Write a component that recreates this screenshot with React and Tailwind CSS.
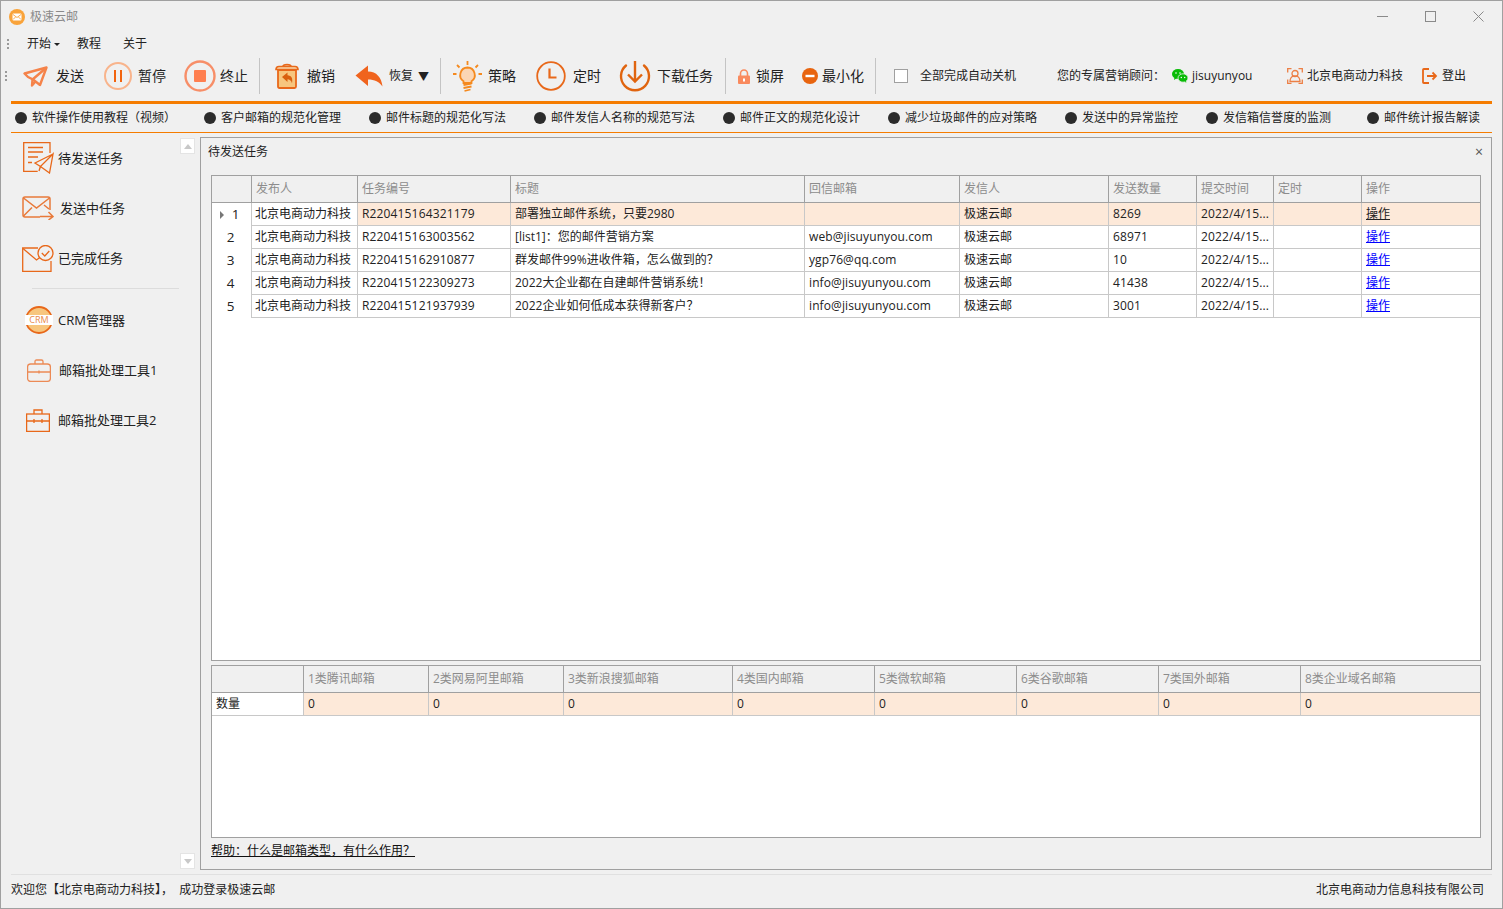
import React from 'react';

const OR = '#e8681a';

const Grip = ({ className }) => (
  <div className={`flex flex-col gap-[2px] w-[3px] shrink-0 ${className}`}>
    <span className="w-[2px] h-[2px] bg-[#9a9a9a]" />
    <span className="w-[2px] h-[2px] bg-[#9a9a9a]" />
    <span className="w-[2px] h-[2px] bg-[#9a9a9a]" />
  </div>
);

const Sep = ({ className }) => <div className={`w-px h-[36px] bg-[#c4c4c4] shrink-0 ${className}`} />;

const Label = ({ children, className }) => (
  <span className={`shrink-0 whitespace-nowrap text-[#222] ${className}`}>{children}</span>
);

const SendIcon = () => (
  <svg viewBox="0 0 25 21" className="w-[25px] h-[21px] ml-[15px] shrink-0" fill="none" stroke="#f5834a" strokeWidth="2.400" strokeLinejoin="round">
    <path d="M1.500 7.500 23.500 1.500 17 19 10 13.500 5 11Z" />
    <path d="M23 2 9.500 13.500 9 19.500 12.500 15.500" />
  </svg>
);

const PauseIcon = () => (
  <svg viewBox="0 0 28 28" className="w-[28px] h-[28px] ml-[20px] shrink-0" fill="none">
    <circle cx="14" cy="14" r="13" stroke="#f8b48c" strokeWidth="2" />
    <path d="M11 8v12M17 8v12" stroke="#f2640f" strokeWidth="2" />
  </svg>
);

const StopIcon = () => (
  <svg viewBox="0 0 32 32" className="w-[32px] h-[32px] ml-[18px] shrink-0" fill="none">
    <circle cx="16" cy="16" r="14.500" stroke="#f78e68" strokeWidth="2.400" />
    <rect x="10" y="10" width="12" height="12" rx="1" fill="#ff7f50" />
  </svg>
);

const UndoIcon = () => (
  <svg viewBox="0 0 24 26" className="w-[24px] h-[26px] ml-[15px] shrink-0" fill="none">
    <path d="M8 3.500C8 1 16 1 16 3.500" stroke={OR} strokeWidth="1.600" />
    <path d="M1 6.500Q1 3.500 4 3.500h16Q23 3.500 23 6.500Z" fill="#f9d9ae" stroke={OR} strokeWidth="1.600" />
    <path d="M3 7h18v16.500q0 1.500-1.500 1.500h-15Q3 25 3 23.500Z" fill="#f7c67e" stroke={OR} strokeWidth="1.800" />
    <path d="M7 14 12.500 9.500v2.800c4 .2 5.500 3 4.500 8-1-3-2.500-4-4.500-4v2.700Z" fill="#d9600f" />
  </svg>
);

const RestoreIcon = () => (
  <svg viewBox="0 0 28 22" className="w-[28px] h-[22px] ml-[20px] shrink-0">
    <path d="M0.500 10.500 13 0.500v6c8.500 0 13.500 6 14.500 15-3-4.500-8-7-14.500-7v6.500Z" fill="#f0641e" />
  </svg>
);

const BulbIcon = () => (
  <svg viewBox="0 0 29 31" className="w-[29px] h-[31px] ml-[12px] shrink-0" fill="none">
    <path d="M14.500 0v4M4 4l2.500 2.500M25 4l-2.500 2.500M0 13h3.500M25.500 13H29" stroke="#f58a1f" strokeWidth="1.800" />
    <path d="M14.500 6.500a7.500 7.500 0 0 0-4 13.700V22h8v-1.800a7.500 7.500 0 0 0-4-13.700Z" fill="#fbd6b4" stroke="#f58a1f" strokeWidth="1.800" />
    <path d="M10.500 24l8-1.500M10.500 27l8-1.500M11.500 30l6-1.500" stroke="#f58a1f" strokeWidth="1.800" />
  </svg>
);

const ClockIcon = () => (
  <svg viewBox="0 0 30 30" className="w-[30px] h-[30px] ml-[20px] shrink-0" fill="none" stroke={OR}>
    <circle cx="15" cy="15" r="13.800" strokeWidth="1.800" />
    <path d="M13.500 7.500v9h7" strokeWidth="2.200" />
  </svg>
);

const DownloadIcon = () => (
  <svg viewBox="0 0 32 32" className="w-[32px] h-[32px] ml-[18px] shrink-0" fill="none" stroke="#e0640f" strokeWidth="2.400">
    <path d="M7 5.500A14 14 0 1 0 25 5.500" strokeLinecap="round" />
    <path d="M16 1v20M9 14.500l7 7 7-7" />
  </svg>
);

const LockIcon = () => (
  <svg viewBox="0 0 14 15" className="w-[14px] h-[15px] ml-[11px] shrink-0">
    <path d="M3.500 7V4.500a3.500 3.500 0 0 1 7 0V7" fill="none" stroke="#f98a5e" strokeWidth="1.600" />
    <rect x="1" y="6.500" width="12" height="8.500" rx="1" fill="#f98a5e" />
    <rect x="6" y="9.500" width="2" height="3" fill="#fff" />
  </svg>
);

const MinIcon = () => (
  <svg viewBox="0 0 16 16" className="w-[16px] h-[16px] ml-[18px] shrink-0">
    <circle cx="8" cy="8" r="8" fill="#e8640f" />
    <rect x="3.500" y="6.800" width="9" height="2.400" fill="#fff" />
  </svg>
);

const WechatIcon = () => (
  <svg viewBox="0 0 16 14" className="w-[16px] h-[14px] ml-[14px] shrink-0">
    <ellipse cx="6" cy="5" rx="6" ry="5" fill="#09bb07" />
    <path d="M2.500 8 2 11l3-2Z" fill="#09bb07" />
    <ellipse cx="11" cy="9" rx="5" ry="4.200" fill="#09bb07" stroke="#f0f0f0" strokeWidth="0.800" />
    <path d="M13 12.500l1.200 1.500-.2-2.500Z" fill="#09bb07" />
    <circle cx="4" cy="4" r="0.800" fill="#fff" />
    <circle cx="8" cy="4" r="0.800" fill="#fff" />
    <circle cx="9.300" cy="8.500" r="0.700" fill="#fff" />
    <circle cx="12.700" cy="8.500" r="0.700" fill="#fff" />
  </svg>
);

const UserIcon = () => (
  <svg viewBox="0 0 16 16" className="w-[16px] h-[16px] ml-[35px] shrink-0" fill="none" stroke="#ec7f45" strokeWidth="1.300">
    <path d="M.7 4.500V.7h3.800M11.500.7h3.800v3.800M.7 11.500v3.800h3.800M11.500 15.300h3.800v-3.800" />
    <circle cx="8" cy="5.500" r="3" />
    <path d="M3 13.500c0-3 2-5 3.500-5.500h3c1.500.5 3.500 2.500 3.500 5.500Z" />
  </svg>
);

const LogoutIcon = () => (
  <svg viewBox="0 0 16 16" className="w-[16px] h-[16px] ml-[19px] shrink-0" fill="none" stroke="#e8681a" strokeWidth="1.800">
    <path d="M7 1H1.800Q1 1 1 1.800v12.400q0 .8.800.8H7" />
    <path d="M5 8H14M10.500 4.500 14 8l-3.500 3.500" />
  </svg>
);

const links = [
  ['客户邮箱的规范化管理', 'w-[120px]', 'ml-[35px]'],
  ['邮件标题的规范化写法', 'w-[120px]', 'ml-[28px]'],
  ['邮件发信人名称的规范写法', 'w-[144px]', 'ml-[28px]'],
  ['邮件正文的规范化设计', 'w-[120px]', 'ml-[28px]'],
  ['减少垃圾邮件的应对策略', 'w-[132px]', 'ml-[28px]'],
  ['发送中的异常监控', 'w-[96px]', 'ml-[28px]'],
  ['发信箱信誉度的监测', 'w-[108px]', 'ml-[28px]'],
  ['邮件统计报告解读', 'w-[96px]', 'ml-[36px]'],
];

const TaskDoc = () => (
  <svg viewBox="0 0 31 32" className="w-[31px] h-[32px] shrink-0" fill="none" stroke={OR} strokeWidth="1.300">
    <path d="M27 11V.7H.7v28.600h14" />
    <path d="M5 5.500h15M5 10h15M5 15h10M5 20.500h4" />
    <path d="M30 12 12 21l5.500 3.500L30 12 26.500 31l-9-6.500-1.500 4.500 1.500-5" />
  </svg>
);

const SendingMail = () => (
  <svg viewBox="0 0 32 24" className="w-[32px] h-[24px] shrink-0" fill="none" stroke="#e8793a" strokeWidth="1.500">
    <path d="M18 21H3q-2 0-2-2V3q0-2 2-2h23q2 0 2 2v11" />
    <path d="M1.500 2 14.500 12 27.500 2M1.500 20l8.500-8.500M27 13l-5-4" />
    <path d="M18 20.500h13M26.500 16 31 20.500l-4.500 3.500" />
  </svg>
);

const DoneMail = () => (
  <svg viewBox="0 0 32 27" className="w-[32px] h-[27px] shrink-0" fill="none" stroke={OR} strokeWidth="1.300">
    <path d="M16 3H.7v23.300h28.300V16" />
    <path d="M1 3.500 14.500 15l4-3" />
    <circle cx="23.500" cy="8" r="7.500" fill="#f0f0f0" />
    <path d="M19.800 8l3 3 4.500-5" />
  </svg>
);

const CrmIcon = () => (
  <svg viewBox="0 0 28 28" className="w-[28px] h-[28px] shrink-0">
    <circle cx="14" cy="14" r="13" fill="#f7c67e" stroke={OR} strokeWidth="1.800" />
    <rect x="0" y="9" width="28" height="10" fill="#fff" />
    <text x="14" y="17" textAnchor="middle" fontSize="9" fill="#e88a4a" fontFamily="'Open Sans', sans-serif">CRM</text>
  </svg>
);

const CaseRound = () => (
  <svg viewBox="0 0 24 23" className="w-[24px] h-[23px] shrink-0" fill="none" stroke="#ec8a55" strokeWidth="1.300">
    <path d="M8 5V2.500Q8 1 9.500 1h5Q16 1 16 2.500V5" />
    <rect x=".6" y="5" width="22.800" height="17.400" rx="3" />
    <path d="M.6 13h22.800M12 11.500v3" />
  </svg>
);

const CaseSquare = () => (
  <svg viewBox="0 0 24 23" className="w-[24px] h-[23px] shrink-0" fill="none" stroke={OR} strokeWidth="1.300">
    <path d="M8 5V1h8v4" />
    <rect x=".6" y="5" width="22.800" height="17.400" />
    <path d="M.6 12h22.800M8 10v4M16 10v4" />
  </svg>
);

const sideA = [
  [<TaskDoc key="a" />, '待发送任务', 'ml-[22px]', 'ml-[4px]'],
  [<SendingMail key="b" />, '发送中任务', 'ml-[21px]', 'ml-[6px]'],
  [<DoneMail key="c" />, '已完成任务', 'ml-[21px]', 'ml-[4px]'],
];
const sideB = [
  [<CrmIcon key="d" />, 'CRM管理器', 'ml-[24px]', 'ml-[5px]'],
  [<CaseRound key="e" />, '邮箱批处理工具1', 'ml-[26px]', 'ml-[8px]'],
  [<CaseSquare key="f" />, '邮箱批处理工具2', 'ml-[25px]', 'ml-[8px]'],
];

const SideItem = ({ item }) => (
  <div className="h-[50px] flex items-center">
    <div className={`flex shrink-0 ${item[2]}`}>{item[0]}</div>
    <span className={`text-[13px] text-[#222] whitespace-nowrap ${item[3]}`}>{item[1]}</span>
  </div>
);

const Arrow = ({ up }) => (
  <div className="w-[15px] h-[16px] bg-white border border-[#e4e4e4] flex items-center justify-center">
    <span className={`w-0 h-0 border-x-[4px] border-x-transparent ${up ? 'border-b-[5px] border-b-[#c8c8c8]' : 'border-t-[5px] border-t-[#c8c8c8]'}`} />
  </div>
);

const taskCols = [
  ['', 'w-[40px]'],
  ['发布人', 'w-[106px]'],
  ['任务编号', 'w-[153px]'],
  ['标题', 'w-[294px]'],
  ['回信邮箱', 'w-[155px]'],
  ['发信人', 'w-[149px]'],
  ['发送数量', 'w-[88px]'],
  ['提交时间', 'w-[77px]'],
  ['定时', 'w-[88px]'],
  ['操作', 'w-[118px]'],
];

const tasks = [
  ['R220415164321179', '部署独立邮件系统，只要2980', '', '8269'],
  ['R220415163003562', '[list1]：您的邮件营销方案', 'web@jisuyunyou.com', '68971'],
  ['R220415162910877', '群发邮件99%进收件箱，怎么做到的？', 'ygp76@qq.com', '10'],
  ['R220415122309273', '2022大企业都在自建邮件营销系统！', 'info@jisuyunyou.com', '41438'],
  ['R220415121937939', '2022企业如何低成本获得新客户？', 'info@jisuyunyou.com', '3001'],
];

const typeCols = [
  ['', 'w-[92px]'],
  ['1类腾讯邮箱', 'w-[125px]'],
  ['2类网易阿里邮箱', 'w-[135px]'],
  ['3类新浪搜狐邮箱', 'w-[169px]'],
  ['4类国内邮箱', 'w-[142px]'],
  ['5类微软邮箱', 'w-[142px]'],
  ['6类谷歌邮箱', 'w-[142px]'],
  ['7类国外邮箱', 'w-[142px]'],
  ['8类企业域名邮箱', 'w-[179px]'],
];

const Th = ({ children }) => (
  <th className="h-[27px] px-[4px] text-left font-normal text-[#8c8c8c] bg-[#f0f0f0] border-r border-b border-[#a0a0a0] last:border-r-0 whitespace-nowrap overflow-hidden">
    {children}
  </th>
);

const Td = ({ children, hot, className = '' }) => (
  <td className={`h-[23px] px-[4px] py-0 text-[#222] border-r border-b border-[#c8c8c8] last:border-r-0 whitespace-nowrap overflow-hidden ${hot ? 'bg-[#fde9d9]' : 'bg-white'} ${className}`}>
    {children}
  </td>
);

const tableCls = 'table-fixed border-separate border-spacing-0 w-[1268px]';

export default function App() {
  return (
    <div className="w-[1503px] h-[909px] flex flex-col bg-[#f0f0f0] border border-[#a0a0a0] text-[12px] leading-none overflow-hidden font-['Open_Sans','Noto_Sans_CJK_SC',sans-serif]">
      {/* title bar */}
      <div className="h-[31px] shrink-0 flex items-center">
        <svg viewBox="0 0 16 16" className="w-[16px] h-[16px] ml-[8px]">
          <circle cx="8" cy="8" r="8" fill="#f9a33a" />
          <rect x="3.500" y="4.500" width="9" height="7" rx="1.200" fill="#fff" />
          <path d="M4 5.500 8 8.500l4-3M4 10.500l2.500-2.500M12 10.500 9.500 8" fill="none" stroke="#f9a33a" strokeWidth="0.900" />
        </svg>
        <span className="ml-[5px] text-[12px] text-[#8a8a8a]">极速云邮</span>
        <svg viewBox="0 0 11 11" className="w-[11px] h-[11px] ml-auto" stroke="#8a8a8a" fill="none"><path d="M0 5.500h11" /></svg>
        <svg viewBox="0 0 11 11" className="w-[11px] h-[11px] ml-[37px]" stroke="#8a8a8a" fill="none"><rect x=".5" y=".5" width="10" height="10" /></svg>
        <svg viewBox="0 0 11 11" className="w-[11px] h-[11px] ml-[37px] mr-[18px]" stroke="#8a8a8a" fill="none"><path d="M.5.500l10 10M10.500.500l-10 10" /></svg>
      </div>

      {/* menu */}
      <div className="h-[24px] shrink-0 flex items-center text-[12px] text-[#222]">
        <Grip className="ml-[6px]" />
        <span className="ml-[17px]">开始</span>
        <span className="ml-[3px] w-0 h-0 border-x-[3px] border-x-transparent border-t-[3px] border-t-[#222]" />
        <span className="ml-[17px]">教程</span>
        <span className="ml-[22px]">关于</span>
      </div>

      {/* toolbar */}
      <div className="h-[40px] mb-[5px] shrink-0 flex items-center text-[14px]">
        <Grip className="ml-[4px]" />
        <SendIcon />
        <Label className="ml-[8px] w-[28px]">发送</Label>
        <PauseIcon />
        <Label className="ml-[6px] w-[28px]">暂停</Label>
        <StopIcon />
        <Label className="ml-[4px] w-[28px]">终止</Label>
        <Sep className="ml-[11px]" />
        <UndoIcon />
        <Label className="ml-[8px] w-[28px]">撤销</Label>
        <RestoreIcon />
        <Label className="ml-[6px] w-[24px] text-[12px]">恢复</Label>
        <Label className="ml-[5px] w-[10px] text-[11px]">▼</Label>
        <Sep className="ml-[12px]" />
        <BulbIcon />
        <Label className="ml-[6px] w-[28px]">策略</Label>
        <ClockIcon />
        <Label className="ml-[7px] w-[28px]">定时</Label>
        <DownloadIcon />
        <Label className="ml-[6px] w-[56px]">下载任务</Label>
        <Sep className="ml-[12px]" />
        <LockIcon />
        <Label className="ml-[5px] w-[28px]">锁屏</Label>
        <MinIcon />
        <Label className="ml-[4px] w-[42px]">最小化</Label>
        <Sep className="ml-[11px]" />
        <span className="ml-[18px] w-[14px] h-[14px] shrink-0 bg-white border border-[#a0a0a0]" />
        <Label className="ml-[12px] w-[96px] text-[12px]">全部完成自动关机</Label>
        <Label className="ml-[41px] w-[101px] text-[12px]">您的专属营销顾问：</Label>
        <WechatIcon />
        <Label className="ml-[4px] w-[60px] text-[12px]">jisuyunyou</Label>
        <UserIcon />
        <Label className="ml-[4px] w-[96px] text-[12px]">北京电商动力科技</Label>
        <LogoutIcon />
        <Label className="ml-[4px] w-[24px] text-[12px]">登出</Label>
      </div>

      <div className="ml-[10px] w-[1481px] h-[3px] shrink-0 bg-[#f57c00]" />

      {/* tutorial links */}
      <div className="h-[28px] shrink-0 flex items-center text-[12px] text-[#222]">
        <span className="ml-[14px] w-[12px] h-[12px] rounded-full bg-[#2b2b2b] shrink-0" />
        <span className="ml-[5px] w-[137px] whitespace-nowrap">软件操作使用教程（视频）</span>
        {links.map(([text, w, ml]) => (
          <React.Fragment key={text}>
            <span className={`w-[12px] h-[12px] rounded-full bg-[#2b2b2b] shrink-0 ${ml}`} />
            <span className={`ml-[5px] whitespace-nowrap shrink-0 ${w}`}>{text}</span>
          </React.Fragment>
        ))}
      </div>

      <div className="ml-[10px] w-[1481px] h-px shrink-0 bg-[#f57c00]" />

      {/* body */}
      <div className="flex-1 flex min-h-0">
        {/* sidebar */}
        <div className="w-[199px] shrink-0 flex">
          <div className="w-[179px] shrink-0">
            {sideA.map((item) => <SideItem key={item[1]} item={item} />)}
            <div className="ml-[31px] w-[147px] h-px bg-[#dcdcdc] mt-[5px] mb-[6px]" />
            {sideB.map((item) => <SideItem key={item[1]} item={item} />)}
          </div>
          <div className="w-[15px] shrink-0 flex flex-col justify-between pt-[5px] pb-[5px]">
            <Arrow up />
            <Arrow />
          </div>
        </div>

        {/* task panel */}
        <div className="w-[1292px] shrink-0 mt-[4px] mb-[4px] border border-[#a0a0a0] flex flex-col px-[10px]">
          <div className="h-[37px] shrink-0 flex items-start justify-between pt-[8px]">
            <span className="-ml-[3px] text-[12px] text-[#222]">待发送任务</span>
            <span className="text-[14px] text-[#555] -mr-[2px] -mt-[1px]">×</span>
          </div>

          <div className="h-[486px] shrink-0 border border-[#a0a0a0] bg-white overflow-hidden">
            <table className={tableCls}>
              <colgroup>
                {taskCols.map(([name, w]) => <col key={name || 'rowhead'} className={w} />)}
              </colgroup>
              <thead>
                <tr>
                  {taskCols.map(([name]) => <Th key={name || 'rowhead'}>{name}</Th>)}
                </tr>
              </thead>
              <tbody>
                {tasks.map((t, i) => (
                  <tr key={t[0]}>
                    <td className="h-[23px] p-0 bg-white border-r border-[#c8c8c8] text-[#222] text-[13.5px]">
                      <div className="flex items-center justify-center relative">
                        {i === 0 && <span className="absolute left-[8px] w-0 h-0 border-y-[4px] border-y-transparent border-l-[4px] border-l-[#777]" />}
                        <span className={i === 0 ? 'ml-[8px]' : 'ml-[-2px]'}>{i + 1}</span>
                      </div>
                    </td>
                    <Td className="!pl-[3px]">北京电商动力科技</Td>
                    <Td hot={i === 0} className="tracking-[0.15px]">{t[0]}</Td>
                    <Td hot={i === 0}>{t[1]}</Td>
                    <Td hot={i === 0} className="tracking-[0.1px]">{t[2]}</Td>
                    <Td hot={i === 0}>极速云邮</Td>
                    <Td hot={i === 0} className="tracking-[0.15px]">{t[3]}</Td>
                    <Td hot={i === 0} className="tracking-[0.15px]">2022/4/15...</Td>
                    <Td hot={i === 0} />
                    <Td hot={i === 0}>
                      <a href="#" className={`underline ${i === 0 ? 'text-[#222]' : 'text-[#0000ff]'}`}>操作</a>
                    </Td>
                  </tr>
                ))}
              </tbody>
            </table>
          </div>

          <div className="h-[173px] shrink-0 mt-[4px] border border-[#a0a0a0] bg-white overflow-hidden">
            <table className={tableCls}>
              <colgroup>
                {typeCols.map(([name, w]) => <col key={name || 'rowhead'} className={w} />)}
              </colgroup>
              <thead>
                <tr>
                  {typeCols.map(([name]) => <Th key={name || 'rowhead'}>{name}</Th>)}
                </tr>
              </thead>
              <tbody>
                <tr>
                  <Td>数量</Td>
                  {typeCols.slice(1).map(([name]) => <Td key={name} hot>0</Td>)}
                </tr>
              </tbody>
            </table>
          </div>

          <div className="mt-[7px] text-[12px] text-[#111]">
            <a href="#" className="underline whitespace-nowrap">帮助：什么是邮箱类型，有什么作用？</a>
          </div>
        </div>
      </div>

      {/* status bar */}
      <div className="ml-[10px] w-[1481px] h-[30px] mb-[4px] shrink-0 border-t border-[#e0e0e0] flex items-center justify-between text-[12px] text-[#222] pr-[8px]">
        <span className="whitespace-pre">欢迎您【北京电商动力科技】，  成功登录极速云邮</span>
        <span>北京电商动力信息科技有限公司</span>
      </div>
    </div>
  );
}
